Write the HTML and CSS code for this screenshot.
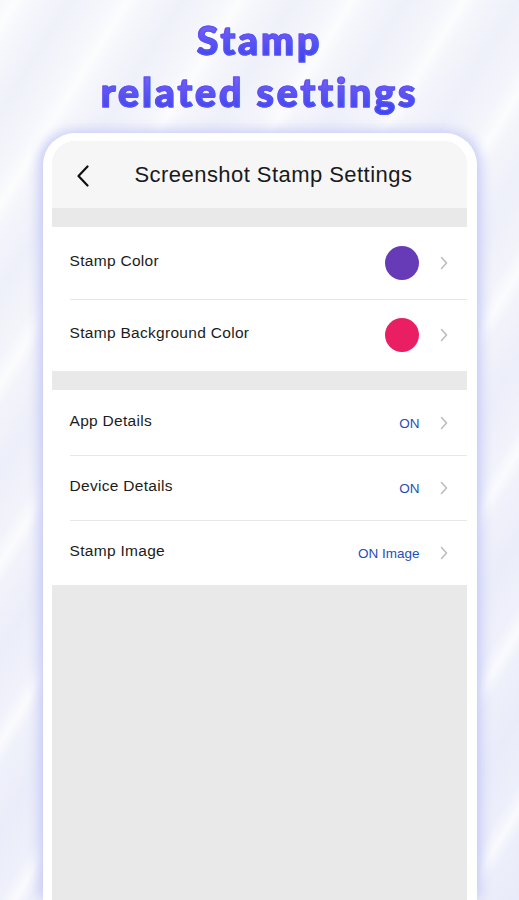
FILE: index.html
```html
<!DOCTYPE html>
<html lang="en">
<head>
<meta charset="utf-8">
<title>Stamp related settings</title>
<link rel="stylesheet" href="styles.css">
</head>
<body>
<div class="page">
  <h1 class="hero"><span class="line">Stamp</span><span class="line">related settings</span></h1>
  <div class="phone">
    <div class="screen">
      <div class="header">
        <svg class="back" width="14" height="22" viewBox="0 0 14 22"><path d="M11.5 1.5 L2.5 11 L11.5 20.5" fill="none" stroke="#111" stroke-width="2.2" stroke-linecap="round" stroke-linejoin="round"/></svg>
        <div class="title">Screenshot Stamp Settings</div>
      </div>
      <div class="group">
        <div class="row tall">
          <span class="label">Stamp Color</span>
          <span class="swatch purple"></span>
          <svg class="chev" width="8" height="14" viewBox="0 0 8 14"><path d="M1.5 1.5 L6.5 7 L1.5 12.5" fill="none" stroke="#bdbdbd" stroke-width="1.6" stroke-linecap="round" stroke-linejoin="round"/></svg>
        </div>
        <div class="row tall">
          <span class="label">Stamp Background Color</span>
          <span class="swatch pink"></span>
          <svg class="chev" width="8" height="14" viewBox="0 0 8 14"><path d="M1.5 1.5 L6.5 7 L1.5 12.5" fill="none" stroke="#bdbdbd" stroke-width="1.6" stroke-linecap="round" stroke-linejoin="round"/></svg>
        </div>
      </div>
      <div class="group">
        <div class="row">
          <span class="label">App Details</span>
          <span class="value">ON</span>
          <svg class="chev" width="8" height="14" viewBox="0 0 8 14"><path d="M1.5 1.5 L6.5 7 L1.5 12.5" fill="none" stroke="#bdbdbd" stroke-width="1.6" stroke-linecap="round" stroke-linejoin="round"/></svg>
        </div>
        <div class="row">
          <span class="label">Device Details</span>
          <span class="value">ON</span>
          <svg class="chev" width="8" height="14" viewBox="0 0 8 14"><path d="M1.5 1.5 L6.5 7 L1.5 12.5" fill="none" stroke="#bdbdbd" stroke-width="1.6" stroke-linecap="round" stroke-linejoin="round"/></svg>
        </div>
        <div class="row">
          <span class="label">Stamp Image</span>
          <span class="value">ON Image</span>
          <svg class="chev" width="8" height="14" viewBox="0 0 8 14"><path d="M1.5 1.5 L6.5 7 L1.5 12.5" fill="none" stroke="#bdbdbd" stroke-width="1.6" stroke-linecap="round" stroke-linejoin="round"/></svg>
        </div>
      </div>
    </div>
  </div>
</div>
</body>
</html>
```
FILE: styles.css
```css
* { box-sizing: border-box; }
html, body { margin: 0; padding: 0; }
body {
  width: 519px;
  height: 900px;
  overflow: hidden;
  font-family: "Liberation Sans", Arial, sans-serif;
  background:
    repeating-linear-gradient(122deg, rgba(255,255,255,0) 0px, rgba(255,255,255,0.7) 14px, rgba(255,255,255,0) 26px, rgba(226,229,247,0.35) 60px, rgba(255,255,255,0) 95px),
    linear-gradient(160deg, #f7f8fc 0%, #f2f3fa 50%, #eceefa 100%);
}
.page {
  display: flex;
  flex-direction: column;
  align-items: center;
  height: 900px;
}
.hero {
  margin: 14px 0 0;
  display: flex;
  flex-direction: column;
  align-items: center;
  font-family: "Lato", sans-serif;
  font-weight: 900;
  font-size: 39px;
  line-height: 52px;
  letter-spacing: 3px;
}
.line {
  display: block;
  background: linear-gradient(180deg, #8060f8 15%, #3c47ee 85%);
  -webkit-background-clip: text;
  background-clip: text;
  color: transparent;
  -webkit-text-stroke: 1.2px #5a52f4;
}
.phone {
  margin-top: 15px;
  width: 434px;
  flex: 1;
  background: #ffffff;
  border-radius: 32px 32px 0 0;
  padding: 8px 10px 0 9px;
  box-shadow: -6px 0 12px -2px rgba(200,204,246,0.9), 6px 0 12px -2px rgba(200,204,246,0.9), 0 -4px 14px rgba(214,217,248,0.6);
}
.screen {
  height: 100%;
  background: #e9e9e9;
  border-radius: 24px 24px 0 0;
  overflow: hidden;
}
.header {
  height: 67px;
  background: #f6f6f6;
  display: flex;
  align-items: center;
  padding-left: 24px;
}
.back { flex: none; margin-top: 2px; }
.title {
  margin-left: 45px;
  font-size: 22px;
  color: #1a1a1a;
  letter-spacing: 0.45px;
}
.group {
  margin-top: 19px;
  background: #ffffff;
}
.row {
  height: 65px;
  display: flex;
  align-items: center;
  padding: 0 19px 0 18px;
  position: relative;
}
.row + .row::before {
  content: "";
  position: absolute;
  left: 18px;
  right: 0;
  top: 0;
  height: 1px;
  background: #e8e8e8;
}
.row.tall { height: 72px; }
.label {
  flex: 1;
  font-size: 15.5px;
  color: #1c1c1c;
  letter-spacing: 0.3px;
  margin-top: -4px;
}
.swatch {
  width: 34px;
  height: 34px;
  border-radius: 50%;
  margin-right: 21px;
}
.swatch.purple { background: #673ab7; }
.swatch.pink { background: #e91e63; }
.value {
  font-size: 13.5px;
  color: #1f4fb5;
  margin-right: 20px;
  margin-top: 1px;
}
.chev { flex: none; }
```
